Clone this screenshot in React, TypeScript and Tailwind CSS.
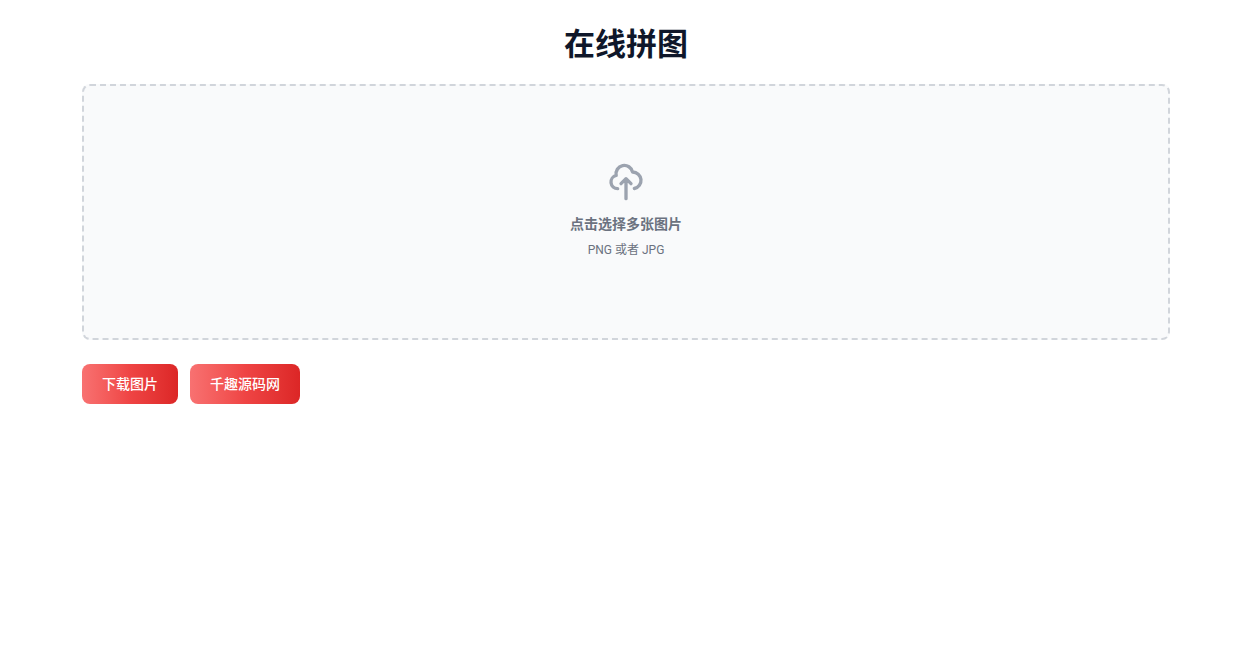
const buttonClass =
  "h-10 cursor-pointer rounded-lg bg-linear-to-r from-[#f87171] via-[#ef4444] to-[#dc2626] px-5 text-center text-sm font-medium text-white";

const UploadIcon = () => (
  <svg
    className="mb-3 h-10 w-10 text-[#9ca3af]"
    fill="none"
    stroke="currentColor"
    viewBox="0 0 24 24"
    aria-hidden="true"
  >
    <path
      strokeLinecap="round"
      strokeLinejoin="round"
      strokeWidth="2"
      d="M7 16a4 4 0 01-.88-7.903A5 5 0 1115.9 6L16 6a5 5 0 011 9.9M15 13l-3-3m0 0l-3 3m3-3v12"
    />
  </svg>
);

export default function App() {
  return (
    <div className="pr-px font-[Roboto,'Noto_Sans_CJK_SC',sans-serif]">
      <main className="mx-auto max-w-6xl px-8 py-6">
        <h1 className="mb-[18px] text-center text-[31px] leading-[42px] font-bold text-[#0f172a]">在线拼图</h1>

        {/* Upload area */}
        <label
          htmlFor="dropzone-file"
          className="flex h-64 w-full cursor-pointer flex-col items-center justify-center rounded-lg border-2 border-dashed border-[#d1d5db] bg-[#f9fafb]"
        >
          <span className="flex flex-col items-center justify-center pt-5 pb-6">
            <UploadIcon />
            <span className="mb-2 text-sm font-semibold text-[#6b7280]">点击选择多张图片</span>
            <span className="text-xs text-[#6b7280]">PNG 或者 JPG</span>
          </span>
          <input id="dropzone-file" type="file" accept="image/png,image/jpeg" multiple className="hidden" />
        </label>

        {/* Actions */}
        <div className="mt-6 flex gap-3">
          <button type="button" className={buttonClass}>下载图片</button>
          <button type="button" className={buttonClass}>千趣源码网</button>
        </div>
      </main>
    </div>
  );
}
